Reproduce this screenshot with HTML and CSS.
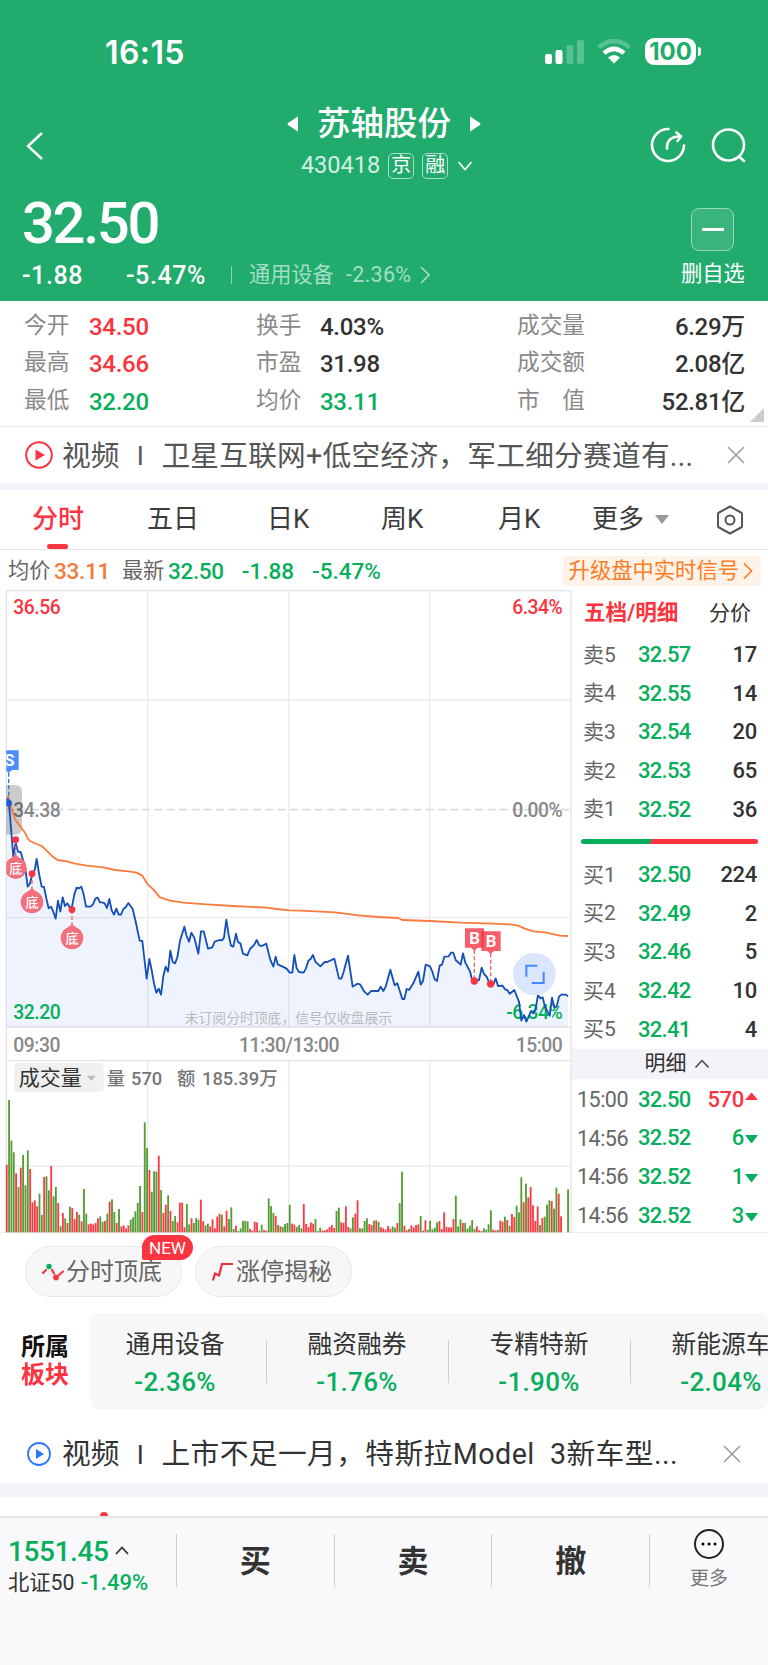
FILE: index.html
```html
<!DOCTYPE html>
<html lang="zh-CN">
<head>
    <meta charset="UTF-8">
    <meta name="viewport" content="width=device-width, initial-scale=1.0">
    <title>苏轴股份 430418</title>
    <link rel="stylesheet" href="styles.css">
</head>
<body>
    <header class="header">
        <div class="status-bar">
            <span class="clock">16:15</span>
            <div class="status-icons">
                <svg class="signal" width="39" height="25" viewBox="0 0 39 25" fill="#fff">
                    <rect x="0" y="15" width="7" height="10" rx="2"/>
                    <rect x="10.5" y="11" width="7" height="14" rx="2"/>
                    <rect x="21.5" y="6" width="7" height="19" rx="2" opacity=".25"/>
                    <rect x="32" y="1" width="7" height="24" rx="2" opacity=".25"/>
                </svg>
                <svg class="wifi" width="34" height="25" viewBox="0 0 34 25" fill="none" stroke="#fff" stroke-width="4.4">
                    <path d="M1.6 8.6Q17-4.600 32.400 8.600" opacity=".25"/>
                    <path d="M7 14.200Q17 5.600 27 14.200"/>
                    <path d="M11 18.600Q17 13.600 23 18.600L17 24.500Z" fill="#fff" stroke="none"/>
                </svg>
                <div class="battery">100</div>
            </div>
        </div>
        <div class="title-bar">
            <svg class="back" width="18" height="30" viewBox="0 0 18 30" fill="none" stroke="#fff" stroke-width="2.4"><path d="M17 2L3 15L17 28"/></svg>
            <div class="stock">
                <div class="stock-name">
                    <svg width="12" height="16" viewBox="0 0 12 16" fill="#fff"><path d="M11 0.500V15.500L1 9Q0 8 1 7Z"/></svg>
                    <h1>苏轴股份</h1>
                    <svg width="12" height="16" viewBox="0 0 12 16" fill="#fff"><path d="M1 0.500V15.500L11 9Q12 8 11 7Z"/></svg>
                </div>
                <div class="stock-code">
                    <span class="code">430418</span>
                    <span class="tag">京</span>
                    <span class="tag">融</span>
                    <svg width="16" height="10" viewBox="0 0 16 10" fill="none" stroke="#fff" stroke-width="1.600"><path d="M1.500 1L8 8.500L14.500 1"/></svg>
                </div>
            </div>
            <div class="title-actions">
                <svg width="36" height="36" viewBox="0 0 36 36" fill="none" stroke="#fff" stroke-width="2.600" stroke-linecap="round" stroke-linejoin="round">
                    <path d="M18.500 2A16 16 0 1 0 34 18.500"/>
                    <path d="M17 21.500Q16.500 9.500 30 9.500"/>
                    <path d="M26.500 5.500L31 9.500L27.500 14"/>
                </svg>
                <svg width="36" height="36" viewBox="0 0 36 36" fill="none" stroke="#fff" stroke-width="2.600" stroke-linecap="round">
                    <circle cx="17.500" cy="18" r="15.500"/>
                    <path d="M28 29.500L33 34"/>
                </svg>
            </div>
        </div>
        <div class="quote">
            <div class="quote-left">
                <div class="price">32.50</div>
                <div class="change">
                    <span class="change-value">-1.88</span>
                    <span class="change-rate">-5.47%</span>
                    <span class="change-line"></span>
                    <span class="industry">通用设备</span>
                    <span class="industry-rate">-2.36%</span>
                    <svg width="10" height="18" viewBox="0 0 10 18" fill="none" stroke="#a4dec4" stroke-width="1.600"><path d="M1 1L9 9L1 17"/></svg>
                </div>
            </div>
            <div class="watch">
                <div class="watch-box"><span></span></div>
                <div class="watch-text">删自选</div>
            </div>
        </div>
    </header>

    <section class="stats">
        <span class="label">今开</span><span class="value red">34.50</span>
        <span class="label">换手</span><span class="value">4.03%</span>
        <span class="label">成交量</span><span class="value right">6.29万</span>
        <span class="label">最高</span><span class="value red">34.66</span>
        <span class="label">市盈</span><span class="value">31.98</span>
        <span class="label">成交额</span><span class="value right">2.08亿</span>
        <span class="label">最低</span><span class="value green">32.20</span>
        <span class="label">均价</span><span class="value green">33.11</span>
        <span class="label">市　值</span><span class="value right">52.81亿</span>
        <i class="corner"></i>
    </section>

    <div class="news">
        <svg class="play" width="28" height="28" viewBox="0 0 28 28"><circle cx="14" cy="14" r="12.800" fill="none" stroke="#fa3440" stroke-width="2"/><path d="M10.500 8.500L20 14L10.500 19.500Z" fill="#fa3440"/></svg>
        <span class="news-type">视频</span>
        <span class="news-sep">I</span>
        <span class="news-text">卫星互联网+低空经济，军工细分赛道有...</span>
        <svg class="close" width="18" height="18" viewBox="0 0 18 18" stroke="#999" stroke-width="1.500"><path d="M1 1L17 17M17 1L1 17"/></svg>
    </div>

    <nav class="tabs">
        <span class="tab active">分时</span>
        <span class="tab">五日</span>
        <span class="tab">日K</span>
        <span class="tab">周K</span>
        <span class="tab">月K</span>
        <span class="tab tab-more">更多<i class="caret"></i></span>
        <svg class="setting" width="28" height="30" viewBox="0 0 28 30" fill="none" stroke="#555" stroke-width="2"><path d="M14 1.500L25 7.500Q26 8 26 9V21Q26 22 25 22.500L14 28.500L3 22.500Q2 22 2 21V9Q2 8 3 7.500Z"/><circle cx="14" cy="15" r="4.500"/></svg>
    </nav>

    <div class="info">
        <span class="info-label">均价</span><span class="info-num orange">33.11</span>
        <span class="info-label latest">最新</span><span class="info-num green">32.50</span>
        <span class="info-num green diff">-1.88</span>
        <span class="info-num green diff">-5.47%</span>
        <span class="upgrade">升级盘中实时信号<svg width="10" height="18" viewBox="0 0 10 18" fill="none" stroke="#fb7c22" stroke-width="1.700"><path d="M1 1.500L8.500 9L1 16.500"/></svg></span>
    </div>

    <main class="board">
        <svg class="chart" width="572" height="643" viewBox="0 0 1716 1929">
            <defs>
                <clipPath id="plot"><rect x="19" y="0" width="1694" height="1929"/></clipPath>
            </defs>
            <g class="grid">
                <path d="M443 2V1311M866 2V1311M1289 2V1311M443 1412V1926M866 1412V1926M1289 1412V1926"/>
                <path d="M19 330H1713M19 983H1713M19 1728H1713"/>
                <path class="frame" d="M19 1926V2H1713V1926M19 1311H1713M19 1412H1713"/>
            </g>
            <path class="zero-line" d="M19 659H1713"/>
            <path class="price-area" id="priceArea"/>

            <g class="axis">
                <text class="red-fill" x="40" y="72">36.56</text>
                <text class="red-fill" x="1687" y="72" text-anchor="end">6.34%</text>
                <text x="40" y="680">34.38</text>
                <text x="1687" y="680" text-anchor="end">0.00%</text>
                <text class="green-fill" x="40" y="1287">32.20</text>
                <text class="green-fill" x="1687" y="1287" text-anchor="end">-6.34%</text>
                <text x="40" y="1386">09:30</text>
                <text x="867" y="1386" text-anchor="middle">11:30/13:00</text>
                <text x="1687" y="1386" text-anchor="end">15:00</text>
            </g>
            <text class="hint" x="554" y="1300">未订阅分时顶底，信号仅收盘展示</text>

            <g clip-path="url(#plot)">
                <path class="cursor" d="M0 585H46Q66 585 66 605V714Q66 734 46 734H0Z"/>
                <polyline class="avg-line" id="avgLine"/>
                <polyline class="price-line" id="priceLine"/>

                <!-- sell signal -->
                <path class="sell-dash" d="M26 548V640"/>
                <path class="sell-flag" d="M0 481H56V540H36L26 549L16 540H0Z"/>
                <text class="flag-text" x="28" y="528">S</text>
                <circle class="sell-dot" cx="26" cy="640" r="10"/>

                <!-- bottom signals -->
                <path class="buy-dash" d="M47 749V802M96 851V903M216 959V1010"/>
                <g class="bottom-pin">
                    <path d="M47 794L59 803A33 33 0 1 1 35 803Z"/>
                    <path d="M96 895L108 904A34 34 0 1 1 84 904Z"/>
                    <path d="M216 1003L228 1012A34 34 0 1 1 204 1012Z"/>
                </g>
                <g class="pin-text">
                    <text x="47" y="850">底</text>
                    <text x="96" y="951">底</text>
                    <text x="216" y="1060">底</text>
                </g>

                <!-- buy signals -->
                <path class="buy-dash" d="M1423 1080V1173M1472 1090V1182"/>
                <path class="buy-flag" d="M1395 1015H1452V1073H1433L1423 1082L1413 1073H1395Z"/>
                <path class="buy-flag" d="M1444 1024H1502V1083H1482L1472 1092L1462 1083H1444Z"/>
                <text class="flag-text" x="1424" y="1062">B</text>
                <text class="flag-text" x="1473" y="1071">B</text>
                <g class="buy-dot">
                    <circle cx="47" cy="749" r="10"/>
                    <circle cx="96" cy="851" r="10"/>
                    <circle cx="216" cy="959" r="10"/>
                    <circle cx="1423" cy="1173" r="11"/>
                    <circle cx="1472" cy="1182" r="11"/>
                </g>
            </g>

            <circle class="zoom-bg" cx="1603" cy="1152" r="64"/>
            <path class="zoom-icon" d="M1579 1160V1127H1612M1595 1179H1631V1145"/>

            <rect class="vol-box" x="43" y="1419" width="268" height="86" rx="12"/>
            <text class="vol-name" x="56" y="1484">成交量</text>
            <path class="vol-caret" d="M261 1457H287L274 1473Z"/>
            <text class="vol-text" x="320" y="1484">量</text>
            <text class="vol-text" x="393" y="1484">570</text>
            <text class="vol-text" x="531" y="1484">额</text>
            <text class="vol-text" x="606" y="1484">185.39万</text>
            <g id="volume"></g>
        </svg>

        <aside class="depth">
            <div class="depth-head"><b>五档/明细</b><span>分价</span></div>
            <div class="depth-row"><span>卖5</span><em>32.57</em><strong>17</strong></div>
            <div class="depth-row"><span>卖4</span><em>32.55</em><strong>14</strong></div>
            <div class="depth-row"><span>卖3</span><em>32.54</em><strong>20</strong></div>
            <div class="depth-row"><span>卖2</span><em>32.53</em><strong>65</strong></div>
            <div class="depth-row"><span>卖1</span><em>32.52</em><strong>36</strong></div>
            <div class="ratio"></div>
            <div class="depth-row"><span>买1</span><em>32.50</em><strong>224</strong></div>
            <div class="depth-row"><span>买2</span><em>32.49</em><strong>2</strong></div>
            <div class="depth-row"><span>买3</span><em>32.46</em><strong>5</strong></div>
            <div class="depth-row"><span>买4</span><em>32.42</em><strong>10</strong></div>
            <div class="depth-row"><span>买5</span><em>32.41</em><strong>4</strong></div>
            <div class="detail-head">明细<svg width="16" height="10" viewBox="0 0 16 10" fill="none" stroke="#444" stroke-width="1.500"><path d="M1.500 8.500L8 1.500L14.500 8.500"/></svg></div>
            <div class="trade-row"><span>15:00</span><em>32.50</em><strong class="red">570</strong><i class="up"></i></div>
            <div class="trade-row"><span>14:56</span><em>32.52</em><strong class="green">6</strong><i class="down"></i></div>
            <div class="trade-row"><span>14:56</span><em>32.52</em><strong class="green">1</strong><i class="down"></i></div>
            <div class="trade-row"><span>14:56</span><em>32.52</em><strong class="green">3</strong><i class="down"></i></div>
        </aside>
    </main>

    <div class="pills">
        <div class="pill">
            <svg width="22" height="18" viewBox="0 0 22 18" fill="none" stroke="#fa3440" stroke-width="2.200" stroke-linecap="round"><path d="M1 10L4 7M10 7L12 10.500M17 12L21 8.500"/><circle cx="7" cy="3.500" r="2.700" fill="#07ae5c" stroke="none"/><circle cx="14" cy="14.500" r="2.900" fill="#fa3440" stroke="none"/></svg>
            分时顶底
            <span class="new">NEW</span>
        </div>
        <div class="pill">
            <svg width="22" height="20" viewBox="0 0 22 20" fill="none" stroke="#e8303c" stroke-width="2.200"><path d="M1 18.500L3 11.500L7 13.500L10 2H21"/></svg>
            涨停揭秘
        </div>
    </div>

    <section class="sectors">
        <div class="sector-title">所属<br><span class="red">板块</span></div>
        <div class="sector-list">
            <div class="sector"><span>通用设备</span><b>-2.36%</b></div>
            <div class="sector"><span>融资融券</span><b>-1.76%</b></div>
            <div class="sector"><span>专精特新</span><b>-1.90%</b></div>
            <div class="sector"><span>新能源车</span><b>-2.04%</b></div>
        </div>
    </section>

    <div class="news news-dark">
        <svg class="play" width="28" height="28" viewBox="0 0 28 28"><circle cx="14" cy="14" r="11" fill="none" stroke="#2a78ff" stroke-width="1.800"/><path d="M11 9L19 14L11 19Z" fill="#2a78ff"/></svg>
        <span class="news-type">视频</span>
        <span class="news-sep">I</span>
        <span class="news-text">上市不足一月，特斯拉Model&nbsp; 3新车型...</span>
        <svg class="close" width="18" height="18" viewBox="0 0 18 18" stroke="#999" stroke-width="1.500"><path d="M1 1L17 17M17 1L1 17"/></svg>
    </div>

    <div class="peek"><i></i></div>

    <footer class="footer">
        <div class="index">
            <div class="index-value">1551.45<svg width="14" height="9" viewBox="0 0 14 9" fill="none" stroke="#333" stroke-width="1.800"><path d="M1 8L7 1.500L13 8"/></svg></div>
            <div class="index-name">北证50 <b>-1.49%</b></div>
        </div>
        <div class="action">买</div>
        <div class="action">卖</div>
        <div class="action">撤</div>
        <div class="more">
            <svg width="32" height="32" viewBox="0 0 32 32"><circle cx="16" cy="16" r="14" fill="none" stroke="#222" stroke-width="2"/><circle cx="10" cy="16" r="1.500"/><circle cx="16" cy="16" r="1.500"/><circle cx="22" cy="16" r="1.500"/></svg>
            <span>更多</span>
        </div>
    </footer>

    <script src="chart.js"></script>
</body>
</html>
```

FILE: styles.css
```css
* {
    box-sizing: border-box;
}

body {
    margin: 0;
    width: 768px;
    background-color: #fff;
    color: #333;
    font-family: Roboto, "Noto Sans CJK SC", sans-serif;
    line-height: 1;
    overflow: hidden;
}

em, i {
    font-style: normal;
}

svg {
    flex-shrink: 0;
}

.red {
    color: #fa3440;
}

.green {
    color: #07ae5c;
}

.orange {
    color: #f47a3c;
}

/* Header */
.header {
    height: 301px;
    background-color: #21ac6e;
    color: #fff;
    overflow: hidden;
}

.status-bar {
    display: flex;
    justify-content: space-between;
    height: 100px;
    padding: 36px 68px 0 105px;
}

.clock {
    font-family: Inter, sans-serif;
    font-size: 32px;
    font-weight: 600;
    line-height: 34px;
    letter-spacing: 0.4px;
}

.status-icons {
    display: flex;
    align-items: flex-start;
    padding-top: 3px;
}

.wifi {
    margin-left: 13px;
}

.battery {
    position: relative;
    width: 51px;
    height: 27px;
    margin: -1px 4px 0 14px;
    border-radius: 9px;
    background-color: #fff;
    color: #21ac6e;
    font-family: Inter, sans-serif;
    font-size: 24px;
    font-weight: 700;
    line-height: 27px;
    text-align: center;
}

.battery::after {
    content: "";
    position: absolute;
    right: -5px;
    top: 9px;
    width: 3px;
    height: 9px;
    border-radius: 0 4px 4px 0;
    background-color: #fff;
}

.title-bar {
    display: grid;
    grid-template-columns: 120px 1fr 120px;
    height: 92px;
    padding: 0 21px 0 25px;
}

.back {
    margin-top: 31px;
}

.stock {
    display: flex;
    flex-direction: column;
    align-items: center;
    padding: 1px 4px 0 0;
}

.stock-name {
    display: flex;
    align-items: center;
    gap: 18px;
    height: 46px;
}

.stock-name h1 {
    margin: 0;
    font-size: 33.5px;
    font-weight: 500;
}

.stock-code {
    display: flex;
    align-items: center;
    gap: 8px;
    height: 38px;
    padding-left: 6px;
}

.code {
    font-size: 23.5px;
    color: #d3efe2;
}

.tag {
    width: 26px;
    height: 26px;
    border: 1.5px solid #a6dfc5;
    border-radius: 5px;
    font-size: 20px;
    line-height: 23px;
    text-align: center;
}

.stock-code svg {
    margin-left: 1px;
}

.title-actions {
    display: flex;
    justify-content: flex-end;
    gap: 25px;
    padding-top: 27px;
}

.quote {
    display: flex;
    justify-content: space-between;
    padding: 0 23px 0 22px;
}

.price {
    height: 62px;
    font-size: 58px;
    font-weight: 500;
    line-height: 62px;
    letter-spacing: -2.4px;
}

.change {
    display: flex;
    align-items: center;
    height: 42px;
    font-size: 25px;
    font-weight: 500;
    letter-spacing: 0.6px;
}

.change-value {
    width: 104px;
}

.change-rate {
    width: 105px;
}

.change-line {
    width: 1px;
    height: 18px;
    margin-right: 17px;
    background-color: #8fd5b5;
}

.industry {
    width: 97px;
    color: #a4dec4;
    font-size: 21.2px;
    font-weight: 400;
    letter-spacing: 0;
}

.industry-rate {
    width: 74px;
    color: #a4dec4;
    font-size: 21.5px;
    font-weight: 400;
    letter-spacing: 0.3px;
}

.watch {
    width: 64px;
    padding-top: 16px;
}

.watch-box {
    display: flex;
    align-items: center;
    justify-content: center;
    width: 43px;
    height: 43px;
    margin-left: 10px;
    border: 1px solid #96d7b8;
    border-radius: 8px;
    background-color: #39b47d;
}

.watch-box span {
    width: 22px;
    height: 3px;
    background-color: #fff;
}

.watch-text {
    margin-top: 12px;
    font-size: 21.3px;
    white-space: nowrap;
}

/* Stats */
.stats {
    position: relative;
    display: grid;
    grid-template-columns: 65px 167px 64px 197px 110px 118px;
    grid-auto-rows: 37.5px;
    align-items: center;
    height: 126px;
    padding: 7px 22px 0 24px;
    border-bottom: 1px solid #e8e8e8;
}

.label {
    color: #8a8a8a;
    font-size: 22.7px;
    line-height: 30px;
    padding-bottom: 2px;
}

.value {
    font-size: 24px;
    font-weight: 500;
    letter-spacing: -0.3px;
}

.value.right {
    text-align: right;
}

.corner {
    position: absolute;
    right: 4px;
    bottom: 4px;
    border-left: 14px solid transparent;
    border-bottom: 14px solid #ccc;
}

/* News */
.news {
    display: flex;
    align-items: center;
    height: 63px;
    padding: 0 23px 0 25px;
    border-bottom: 7px solid #f2f4f9;
    color: #555;
    font-size: 28.7px;
    white-space: nowrap;
}

.news-type {
    margin-left: 9px;
    padding-top: 2px;
}

.news-sep {
    width: 42px;
    padding-top: 2px;
    font-size: 26px;
    text-align: center;
}

.news-text {
    padding-top: 2px;
    letter-spacing: 0.25px;
}

.close {
    margin-left: auto;
}

.news-dark {
    height: 88px;
    padding-right: 27px;
    border-bottom-width: 14px;
    padding-top: 15px;
    color: #333;
}

.news-dark .news-text {
    letter-spacing: 0.45px;
}

/* Tabs */
.tabs {
    display: grid;
    grid-template-columns: 115px 120px 114px 117px 94px 124px 28px;
    align-items: center;
    height: 60px;
    padding-left: 32px;
    border-bottom: 1px solid #e4e4e4;
    font-size: 26px;
    color: #3c3c3c;
}

.tab {
    position: relative;
    line-height: 59px;
}

.tab.active {
    color: #fa3440;
    font-weight: 500;
}

.tab.active::after {
    content: "";
    position: absolute;
    left: 15px;
    bottom: 0;
    width: 21px;
    height: 5px;
    border-radius: 3px;
    background-color: #fa3440;
}

.tab-more {
    display: flex;
    align-items: center;
}

.caret {
    margin-left: 11px;
    border: 7px solid transparent;
    border-top: 9px solid #999;
    border-bottom: 0;
}

/* Average and last price */
.info {
    display: flex;
    align-items: center;
    height: 40px;
    padding: 2px 7px 0 8px;
    font-size: 21.2px;
}

.info-label {
    color: #666;
    width: 46px;
}

.info-num {
    font-size: 22.5px;
    font-weight: 500;
    letter-spacing: -0.3px;
}

.latest {
    margin-left: 12px;
}

.diff {
    margin-left: 18px;
    letter-spacing: 0;
}

.upgrade {
    display: flex;
    align-items: center;
    gap: 4px;
    height: 30px;
    margin-left: auto;
    padding: 0 8px 0 6px;
    border-radius: 4px;
    background-color: #fff2e8;
    color: #fb7c22;
    font-size: 21.3px;
}

/* Chart */
.board {
    display: flex;
    height: 643px;
    border-bottom: 1px solid #ececec;
}

.chart {
    display: block;
}

.grid path {
    fill: none;
    stroke: #ececee;
    stroke-width: 4;
}

.grid .frame {
    stroke: #e4e4e6;
}

.zero-line {
    stroke: #d3dde5;
    stroke-width: 5;
    stroke-dasharray: 24 13;
}

.axis text {
    fill: #888;
    font-size: 58px;
    font-weight: 500;
    letter-spacing: -1.5px;
}

.axis .red-fill {
    fill: #fa3440;
}

.axis .green-fill {
    fill: #07ae5c;
}

.hint {
    fill: #bbb;
    font-size: 41.5px;
}

.cursor {
    fill: rgba(0, 0, 0, 0.2);
}

.price-area {
    fill: rgba(70, 125, 245, 0.09);
}

.price-line, .avg-line {
    fill: none;
    stroke: #1450b8;
    stroke-width: 5.5;
    stroke-linejoin: round;
}

.avg-line {
    stroke: #fb7a3c;
}

.sell-dash, .buy-dash {
    stroke: #2e76e0;
    stroke-width: 4;
    stroke-dasharray: 12 7;
}

.buy-dash {
    stroke: #f5606c;
}

.sell-flag {
    fill: #4b8efb;
}

.buy-flag {
    fill: rgba(247, 60, 76, 0.83);
}

.flag-text {
    fill: #fff;
    font-size: 50px;
    font-weight: 700;
    text-anchor: middle;
}

.sell-dot {
    fill: #1b5fd0;
}

.buy-dot {
    fill: #fa3440;
}

.bottom-pin {
    fill: #f36f7c;
}

.pin-text {
    fill: #fff;
    font-size: 39px;
    font-weight: 500;
    text-anchor: middle;
}

.zoom-bg {
    fill: #d9e4fc;
    opacity: 0.95;
}

.zoom-icon {
    fill: none;
    stroke: #4488ff;
    stroke-width: 6;
}

.vol-box {
    fill: #f0f0f0;
}

.vol-name {
    fill: #333;
    font-size: 63px;
}

.vol-caret {
    fill: #bbb;
}

.vol-text {
    fill: #777;
    font-size: 55px;
    font-weight: 500;
}

.bar-up {
    fill: #fb3a43;
}

.bar-down {
    fill: #549c33;
}

/* Order book */
.depth {
    width: 196px;
    font-size: 22px;
}

.depth-head {
    display: flex;
    align-items: center;
    justify-content: space-between;
    height: 46px;
    padding: 0 17px 0 12px;
    font-size: 21px;
}

.depth-head b {
    color: #fa3440;
    font-size: 21.6px;
    font-weight: 700;
}

.depth-row, .trade-row {
    display: grid;
    grid-template-columns: 55px 1fr 60px;
    align-items: center;
    height: 38.6px;
    padding: 0 11px 0 11px;
    white-space: nowrap;
}

.depth-row span {
    color: #666;
    font-size: 21px;
}

.depth em, .depth strong {
    font-weight: 500;
}

.depth em {
    color: #07ae5c;
    letter-spacing: -0.7px;
}

.depth strong {
    text-align: right;
    letter-spacing: -0.3px;
}

.ratio {
    height: 5px;
    margin: 10px 10px 12px 9px;
    border-radius: 3px;
    background: linear-gradient(125deg, #07ae5c 39.5%, #fa3440 39.6%);
}

.detail-head {
    display: flex;
    align-items: center;
    justify-content: center;
    gap: 7px;
    height: 30px;
    padding-left: 14px;
    background-color: #f2f4f9;
    font-size: 21px;
}

.trade-row {
    grid-template-columns: 61px 1fr 50px 14px;
    padding: 3px 10px 0 5px;
}

.trade-row span {
    color: #666;
    font-size: 21.5px;
    letter-spacing: -0.5px;
}

.up, .down {
    margin-left: 1px;
    border: 6.5px solid transparent;
    border-bottom: 7px solid #fa3440;
    border-top: 0;
    margin-top: -7px;
}

.down {
    border-top: 8px solid #07ae5c;
    border-bottom: 0;
    margin-top: 2px;
}

/* Tool pills */
.pills {
    display: flex;
    gap: 13px;
    height: 80px;
    padding: 13px 25px 0;
}

.pill {
    position: relative;
    display: flex;
    align-items: center;
    justify-content: center;
    gap: 2px;
    width: 157px;
    height: 51px;
    padding-right: 3px;
    border: 1px solid #e8e8e8;
    border-radius: 26px;
    background-color: #f7f7f7;
    color: #666;
    font-size: 24px;
    white-space: nowrap;
}

.new {
    position: absolute;
    top: -12px;
    left: 116px;
    width: 51px;
    height: 25px;
    border-radius: 13px 13px 13px 2px;
    background-color: #fa3440;
    color: #fff;
    font-size: 17px;
    line-height: 26px;
    text-align: center;
}

/* Sectors */
.sectors {
    display: flex;
    align-items: center;
    height: 96px;
}

.sector-title {
    width: 90px;
    flex-shrink: 0;
    padding-left: 21px;
    color: #111;
    font-size: 24px;
    font-weight: 700;
    line-height: 28px;
}

.sector-list {
    display: flex;
    width: 678px;
    height: 96px;
    border-radius: 8px;
    background-color: #f7f7f7;
    overflow: hidden;
}

.sector {
    position: relative;
    display: flex;
    flex-direction: column;
    align-items: center;
    flex-shrink: 0;
    width: 182px;
    padding: 20px 2px 0 0;
    font-size: 24.8px;
}

.sector:first-child {
    width: 177px;
    padding-right: 7px;
}

.sector b {
    margin-top: 11px;
    color: #07ae5c;
    font-size: 26px;
    font-weight: 500;
    letter-spacing: 0.3px;
}

.sector:not(:last-child)::after {
    content: "";
    position: absolute;
    right: 0;
    top: 27px;
    width: 1px;
    height: 43px;
    background-color: #d0d0d0;
}

.peek {
    height: 21px;
    border-bottom: 2px solid #e6e6e8;
    padding: 15px 0 0 100px;
    overflow: hidden;
}

.peek i {
    display: block;
    width: 8px;
    height: 8px;
    border-radius: 50%;
    background-color: #fa3440;
}

/* Bottom trade bar */
.footer {
    display: flex;
    height: 147px;
    padding-top: 16px;
    background-color: #f9f9fc;
}

.index {
    width: 177px;
    height: 53px;
    padding: 4px 0 0 8px;
    border-right: 1px solid #d0d0d2;
    white-space: nowrap;
}

.index-value {
    display: flex;
    align-items: center;
    gap: 7px;
    color: #07ae5c;
    font-size: 28px;
    font-weight: 500;
    letter-spacing: -0.4px;
}

.index-value svg {
    margin-bottom: 4px;
}

.index-name {
    margin-top: 6px;
    font-size: 21.3px;
}

.index-name b {
    color: #07ae5c;
    font-size: 22px;
    font-weight: 500;
    margin-left: 1px;
}

.action {
    width: 157.7px;
    height: 53px;
    border-right: 1px solid #d0d0d2;
    font-size: 31px;
    font-weight: 700;
    line-height: 56px;
    text-align: center;
}

.more {
    display: flex;
    flex-direction: column;
    align-items: center;
    width: 118px;
    color: #777;
    font-size: 19px;
    margin-top: -6px;
    gap: 9px;
}
```

FILE: chart.js
```javascript
// x,y pairs in chart units
var price = '20,625 27,640 40,800 47,758 54,785 62,786 69,810 76,835 83,890 90,880 97,852 104,840 110,807 117,850 125,890 132,891 139,925 146,955 153,950 160,965 167,986 174,932 181,965 188,922 195,948 202,940 209,952 216,950 223,913 230,893 237,895 244,890 251,913 258,950 272,950 279,943 286,926 293,923 300,937 307,937 314,940 321,954 328,927 335,961 342,974 349,956 356,974 363,974 370,957 377,952 385,939 398,957 406,990 419,1052 427,1053 440,1166 448,1107 455,1140 462,1180 469,1208 476,1196 483,1214 490,1158 497,1130 504,1145 511,1082 518,1116 525,1120 532,1102 540,1052 553,1010 560,1038 567,1055 574,1028 583,1043 595,1091 603,1024 611,1024 616,1043 624,1076 637,1072 644,1055 658,1050 666,1051 672,1043 679,989 686,1035 693,1067 700,1070 708,1031 714,1056 721,1060 729,1091 742,1096 750,1077 763,1064 770,1050 778,1066 785,1068 799,1061 806,1090 812,1112 820,1130 827,1100 833,1123 848,1130 860,1136 869,1148 877,1148 883,1095 890,1135 897,1146 911,1148 918,1135 925,1112 932,1107 939,1095 946,1115 961,1129 974,1116 982,1116 1003,1106 1017,1166 1024,1166 1031,1145 1044,1097 1058,1190 1072,1181 1080,1183 1093,1205 1103,1214 1113,1203 1135,1203 1142,1190 1150,1203 1157,1190 1171,1139 1184,1186 1192,1180 1207,1227 1213,1227 1220,1197 1227,1200 1240,1180 1255,1145 1262,1184 1269,1173 1277,1124 1290,1129 1297,1145 1304,1168 1311,1173 1319,1127 1326,1124 1333,1100 1346,1099 1353,1088 1360,1088 1367,1110 1382,1124 1389,1090 1396,1118 1410,1144 1417,1173 1437,1170 1445,1133 1452,1152 1460,1160 1467,1177 1480,1183 1487,1165 1494,1188 1508,1187 1515,1198 1522,1200 1529,1211 1543,1200 1550,1218 1557,1235 1564,1292 1572,1275 1579,1295 1586,1280 1593,1263 1600,1270 1607,1255 1614,1215 1621,1225 1628,1222 1635,1250 1649,1277 1656,1223 1663,1252 1670,1250 1677,1220 1684,1214 1698,1214 1704,1219';

var average = '20,620 26,622 34,655 45,688 60,708 76,730 83,745 90,753 110,762 125,768 140,782 155,797 172,810 205,815 225,821 260,827 310,832 345,840 385,844 410,848 427,857 443,883 460,898 480,922 510,932 550,938 620,943 700,948 800,953 830,957 870,961 900,962 963,965 1005,967 1030,970 1075,976 1135,981 1195,984 1207,990 1290,993 1380,998 1480,1001 1530,1003 1555,1007 1575,1016 1600,1024 1635,1027 1680,1037 1704,1038';

// One bar per minute, negative means the price fell
var volume = [
    203, -397, -275, -240, 177, -136, 194, -232, -141, -246, 190, 90, 96, 78, -116, -52, 166, -168, -126, 199,
    -108, -136, 88, -18, 58, -42, 28, -77, 73, 40, 61, -53, 33, -130, -56, 24, 26, 24, 28, 42,
    -48, -32, 34, -56, 92, -99, -61, 28, -70, 18, 21, 12, 21, -38, -45, -63, -88, -139, 61, -330,
    -253, 187, -122, -183, -182, 230, -127, 58, 83, -111, 64, -34, -49, 30, 89, 89, 15, -85, -24, 42,
    -28, -43, -38, 98, 33, -21, -26, 18, 39, 12, 47, 56, -53, 18, 65, -40, -75, -10, 20, -4,
    -12, -35, -34, -33, 10, 5, 32, 30, -5, -23, 7, 5, -102, -79, -58, 49, -22, 18, -16, -25,
    -28, -83, 26, 23, -16, -22, -12, 85, 25, 16, 30, 26, -40, -4, -14, 6, 6, 9, 16, 22,
    13, -64, -74, 30, 28, 78, 16, -12, -45, 56, 96, -12, -12, -34, -42, 25, 22, -35, 36, -31,
    15, 12, 8, 19, 11, -18, -14, 28, -88, -182, 20, 6, -10, 21, 15, 22, 24, -49, 5, 36,
    -8, -35, -9, -14, -30, 34, 10, 60, 17, 15, 15, 40, -110, -18, -39, 28, -28, -11, -20, -37,
    -10, 18, 6, 4, -12, -8, -24, -66, 8, 6, -7, 35, 32, -47, 37, -20, 55, 46, -80, -60,
    -165, 90, -146, 105, 136, 81, 34, 78, -22, 43, -47, -83, -96, 94, -71, -134, 116, 48, 0, 0,
    -129
];

document.getElementById('priceLine').setAttribute('points', price);
document.getElementById('avgLine').setAttribute('points', average);
document.getElementById('priceArea').setAttribute('d', 'M20 1311L' + price + ' 1704 1311Z');

var group = document.getElementById('volume');
var step = (1704 - 20) / (volume.length - 1);
volume.forEach(function (v, i) {
    var h = Math.abs(v);
    var bar = document.createElementNS('http://www.w3.org/2000/svg', 'rect');
    bar.setAttribute('x', 17.5 + i * step);
    bar.setAttribute('y', 1927 - h);
    bar.setAttribute('width', 5.5);
    bar.setAttribute('height', h);
    bar.setAttribute('class', v > 0 ? 'bar-up' : 'bar-down');
    group.appendChild(bar);
});
```
